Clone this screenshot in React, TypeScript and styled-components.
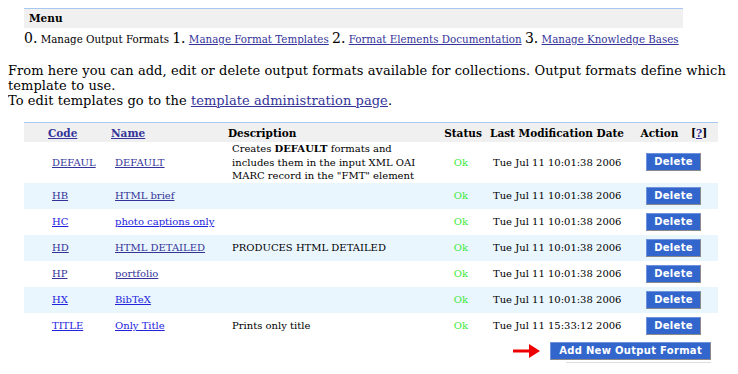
import React, { FC } from 'react'
import styled, { createGlobalStyle } from 'styled-components'

const GlobalStyle = createGlobalStyle`
  body {
    margin: 8px;
    background: #fff;
    font-family: 'DejaVu Serif', serif;
    color: #000;
  }
`

const MenuBox = styled.div`
  margin: 0 0 0 16px;
  width: 659px;
  border-top: 1px solid #a8c8f0;
`

const MenuHead = styled.div`
  background: #f0f0f0;
  font-weight: bold;
  font-size: 10.5px;
  padding: 4px 5px;
  height: 11px;
  line-height: 11px;
`

const MenuItems = styled.div`
  padding-top: 2px;
  font-size: 10.3px;
  line-height: 16px;
  white-space: nowrap;
`

const Num = styled.span`
  font-size: 14px;
`

const Link = styled.a<{ $fresh?: boolean }>`
  color: ${(p) => (p.$fresh ? '#2222dd' : '#333399')};
  text-decoration: underline;
  cursor: pointer;
`

const Intro = styled.p`
  margin: 16px 0 0;
  font-size: 13px;
  letter-spacing: 0.06px;
  line-height: 15px;
  white-space: nowrap;
`

const Table = styled.table`
  margin: 14px 0 0 16px;
  width: 694px;
  border-collapse: collapse;
  table-layout: fixed;
  border-top: 1px solid #a8c8f0;
  font-size: 10px;
`

const Th = styled.th<{ $pad?: number; $center?: boolean }>`
  background: #f0f0f0;
  height: 19px;
  padding: 0 0 0 ${(p) => p.$pad ?? 4}px;
  text-align: ${(p) => (p.$center ? 'center' : 'left')};
  font-weight: bold;
  font-size: 10.5px;
  white-space: nowrap;
`

const Row = styled.tr<{ $alt?: boolean }>`
  background: ${(p) => (p.$alt ? '#eaf6fe' : '#fff')};
`

const Td = styled.td<{ $pad?: number; $center?: boolean; $tall?: boolean }>`
  height: ${(p) => (p.$tall ? 40 : 26)}px;
  padding: 0 4px 0 ${(p) => p.$pad ?? 8}px;
  text-align: ${(p) => (p.$center ? 'center' : 'left')};
  vertical-align: middle;
  line-height: 13.5px;
  white-space: ${(p) => (p.$tall ? 'normal' : 'nowrap')};
`

const Ok = styled.span`
  color: #3be83b;
`

const Button = styled.button<{ $pad?: number }>`
  background: #3366cc;
  color: #fff;
  font-family: 'DejaVu Sans', sans-serif;
  font-weight: bold;
  font-size: 10px;
  letter-spacing: 0.3px;
  border: 1px solid;
  border-color: #6f93dc #8a8a8a #8a8a8a #6f93dc;
  padding: 0 ${(p) => p.$pad ?? 8}px;
  height: 18px;
  line-height: 16px;
  cursor: pointer;
`

const Footer = styled.div`
  display: flex;
  justify-content: flex-end;
  align-items: flex-start;
  gap: 9px;
  width: 703px;
  margin-top: 3px;
`

const AddWrap = styled.div`
  display: flex;
  flex-direction: column;
  align-items: flex-end;
  gap: 2px;
`

const Underline = styled.div`
  width: 145px;
  height: 1px;
  background: #ddd;
`

interface Format {
  code: string
  name: string
  desc?: React.ReactNode
  date: string
  fresh?: boolean
}

const formats: Format[] = [
  {
    code: 'DEFAUL',
    name: 'DEFAULT',
    desc: (
      <>
        Creates <b>DEFAULT</b> formats and includes them in the input XML OAI MARC record in the "FMT" element
      </>
    ),
    date: 'Tue Jul 11 10:01:38 2006',
  },
  { code: 'HB', name: 'HTML brief', date: 'Tue Jul 11 10:01:38 2006' },
  { code: 'HC', name: 'photo captions only', date: 'Tue Jul 11 10:01:38 2006', fresh: true },
  { code: 'HD', name: 'HTML DETAILED', desc: 'PRODUCES HTML DETAILED', date: 'Tue Jul 11 10:01:38 2006' },
  { code: 'HP', name: 'portfolio', date: 'Tue Jul 11 10:01:38 2006' },
  { code: 'HX', name: 'BibTeX', date: 'Tue Jul 11 10:01:38 2006', fresh: true },
  { code: 'TITLE', name: 'Only Title', desc: 'Prints only title', date: 'Tue Jul 11 15:33:12 2006', fresh: true },
]

const Arrow: FC = () => (
  <svg width="28" height="16" viewBox="0 0 28 16" style={{ marginTop: 1 }}>
    <path d="M0 6.5 H16 V1 L27 8 L16 15 V9.5 H0 Z" fill="#ee0000" />
  </svg>
)

const App: FC = () => (
  <>
    <GlobalStyle />
    <MenuBox>
      <MenuHead>Menu</MenuHead>
      <MenuItems>
        <Num>0.</Num> Manage Output Formats <Num>1.</Num> <Link>Manage Format Templates</Link>{' '}
        <Num>2.</Num> <Link>Format Elements Documentation</Link> <Num>3.</Num>{' '}
        <Link>Manage Knowledge Bases</Link>
      </MenuItems>
    </MenuBox>
    <Intro>
      From here you can add, edit or delete output formats available for collections. Output formats define which
      <br />
      template to use.
      <br />
      To edit templates go to the <Link>template administration page</Link>.
    </Intro>
    <Table>
      <colgroup>
        <col style={{ width: 83 }} />
        <col style={{ width: 117 }} />
        <col style={{ width: 214 }} />
        <col style={{ width: 50 }} />
        <col style={{ width: 145 }} />
        <col style={{ width: 53 }} />
        <col style={{ width: 32 }} />
      </colgroup>
      <thead>
        <tr>
          <Th $pad={24}>
            <Link>Code</Link>
          </Th>
          <Th>
            <Link>Name</Link>
          </Th>
          <Th>Description</Th>
          <Th $pad={0} $center>
            Status
          </Th>
          <Th $pad={2}>Last Modification Date</Th>
          <Th $pad={0} $center>
            Action
          </Th>
          <Th $pad={5}>
            [<Link>?</Link>]
          </Th>
        </tr>
      </thead>
      <tbody>
        {formats.map((f, i) => (
          <Row key={f.code} $alt={i % 2 === 1}>
            <Td $pad={28} $tall={i === 0}>
              <Link $fresh={f.fresh}>{f.code}</Link>
            </Td>
            <Td $tall={i === 0}>
              <Link $fresh={f.fresh}>{f.name}</Link>
            </Td>
            <Td $tall={i === 0}>{f.desc}</Td>
            <Td $pad={0} $center $tall={i === 0}>
              <Ok>Ok</Ok>
            </Td>
            <Td $pad={5} $tall={i === 0}>
              {f.date}
            </Td>
            <Td colSpan={2} $pad={0} $center $tall={i === 0}>
              <Button $pad={7}>Delete</Button>
            </Td>
          </Row>
        ))}
      </tbody>
    </Table>
    <Footer>
      <Arrow />
      <AddWrap>
        <Button>Add New Output Format</Button>
        <Underline />
      </AddWrap>
    </Footer>
  </>
)

export default App
